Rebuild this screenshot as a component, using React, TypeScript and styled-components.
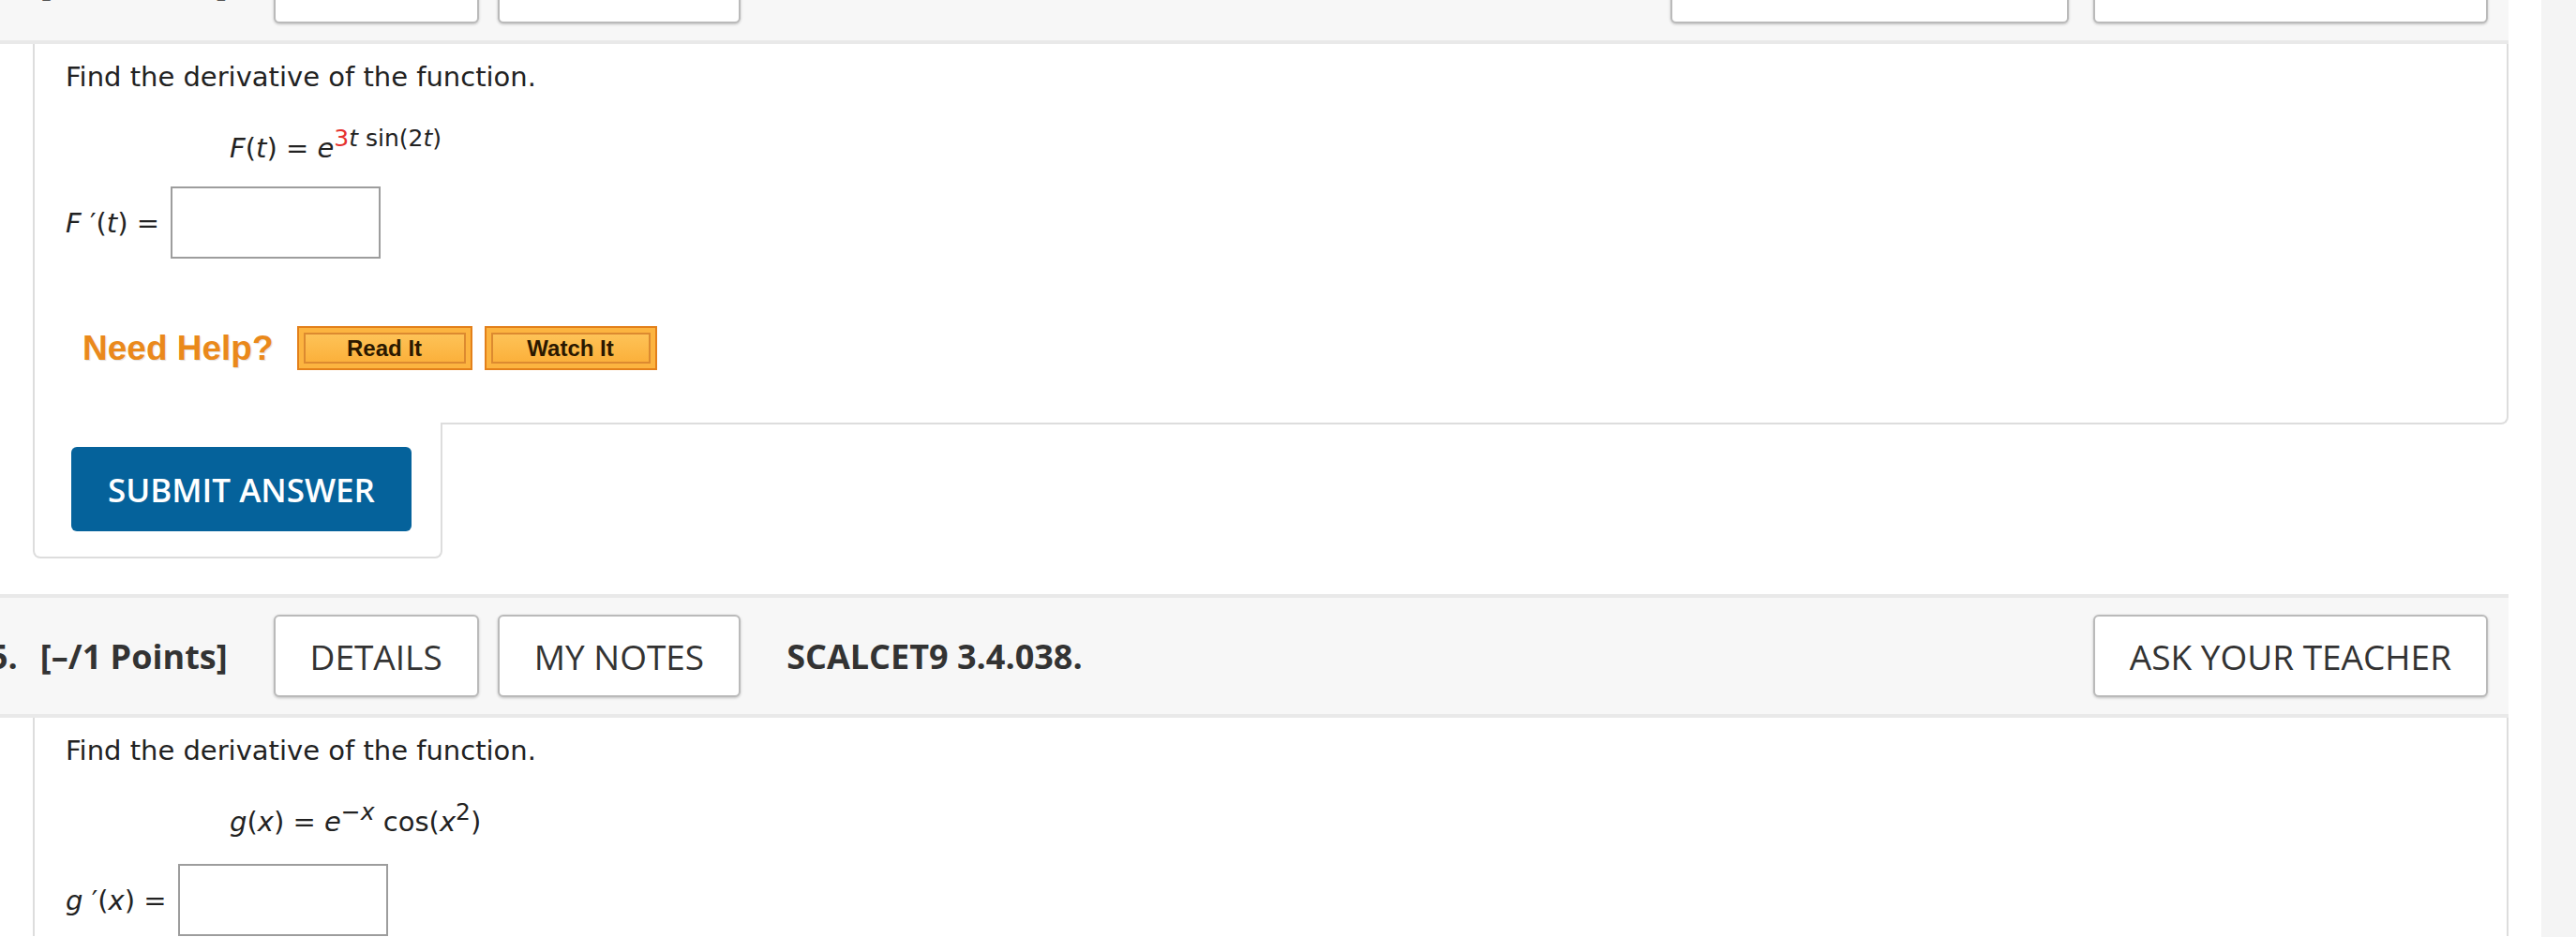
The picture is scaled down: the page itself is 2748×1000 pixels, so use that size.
import React from "react";
import styled, { createGlobalStyle, css } from "styled-components";

const GlobalStyle = createGlobalStyle`
  html, body {
    margin: 0;
    padding: 0;
    background: #fff;
  }
  body {
    font-family: "DejaVu Sans", Verdana, sans-serif;
    color: #222;
  }
`;

const Page = styled.div`
  display: grid;
  grid-template-columns: 2676px 35px 1fr;
  height: 1000px;
  overflow: hidden;
`;

const Main = styled.main`
  min-width: 0;
`;

const SideTrack = styled.div`
  grid-column: 3;
  background: #f4f4f4;
`;

/* ---------- question header ---------- */

const QHeader = styled.header<{ $offset: number }>`
  display: flex;
  align-items: center;
  height: 132px;
  box-sizing: border-box;
  margin-top: ${(p) => p.$offset}px;
  padding-right: 22px;
  background: #f7f7f7;
  border-top: 4px solid #e9e9e9;
  border-bottom: 4px solid #e9e9e9;
  font-family: "Open Sans", "DejaVu Sans", sans-serif;
  font-size: 36px;
  color: #333;
  white-space: nowrap;
`;

const QNumber = styled.span`
  font-weight: 700;
  margin-left: -12px;
  margin-right: 24px;
`;

const Points = styled.span`
  font-weight: 700;
  margin-right: 49px;
`;

const ButtonGroup = styled.div<{ $right?: boolean }>`
  display: flex;
  gap: ${(p) => (p.$right ? "26px" : "20px")};
  ${(p) =>
    p.$right
      ? css`
          margin-left: auto;
        `
      : css`
          margin-right: 49px;
        `}
`;

const HeadButton = styled.button`
  height: 88px;
  box-sizing: border-box;
  padding: 0 37px;
  background: #fff;
  border: 2px solid #bababa;
  border-radius: 6px;
  box-shadow: 0 1px 3px rgba(0, 0, 0, 0.22);
  font-family: inherit;
  font-size: 37px;
  color: #333;
  cursor: pointer;
`;

const Code = styled.span`
  font-weight: 700;
`;

/* ---------- question body ---------- */

const QBody = styled.div`
  margin-left: 35px;
`;

const Content = styled.div<{ $closed?: boolean }>`
  background: #fff;
  border-left: 2px solid #dddddd;
  border-right: 2px solid #dddddd;
  padding: 15px 0 0 33px;
  ${(p) =>
    p.$closed &&
    css`
      padding-bottom: 56px;
      border-bottom: 2px solid #dddddd;
      border-bottom-right-radius: 8px;
    `}
`;

const Prompt = styled.p`
  margin: 0;
  font-size: 29px;
  line-height: 40px;
`;

const Equation = styled.div`
  margin-top: 33px;
  padding-left: 175px;
  font-size: 29px;
  line-height: 40px;
  white-space: nowrap;
`;

const Var = styled.span`
  font-style: italic;
`;

const Sup = styled.span`
  font-size: 25px;
  line-height: 1;
  vertical-align: 12px;
`;

const Random = styled.span`
  color: #e5312f;
`;

const AnswerRow = styled.div<{ $gap: number }>`
  display: flex;
  align-items: center;
  gap: 12px;
  margin-top: ${(p) => p.$gap}px;
`;

const AnswerLabel = styled.span`
  font-size: 29px;
  white-space: nowrap;
`;

const AnswerBox = styled.input`
  width: 224px;
  height: 77px;
  box-sizing: border-box;
  border: 2px solid #9d9d9d;
  background: #fff;
  padding: 0 8px;
  font-size: 29px;
`;

const HelpRow = styled.div`
  display: flex;
  align-items: center;
  gap: 13px;
  height: 47px;
  margin-top: 72px;
`;

const NeedHelp = styled.span`
  margin-left: 18px;
  margin-right: 12px;
  font-family: "Liberation Sans", Arial, sans-serif;
  font-weight: 700;
  font-size: 37px;
  color: #ea891b;
  text-shadow: 1px 1px 1px rgba(0, 0, 0, 0.12);
`;

const HelpButton = styled.button<{ $width: number }>`
  width: ${(p) => p.$width}px;
  height: 47px;
  box-sizing: border-box;
  padding: 0;
  border: 2px solid #e3801a;
  background: linear-gradient(#fec75e, #fbac34);
  box-shadow: inset 0 0 0 5px #fcb440, inset 0 0 0 7px #dc8a30;
  font-family: "Liberation Sans", Arial, sans-serif;
  font-weight: 700;
  font-size: 24px;
  color: #2a1800;
  cursor: pointer;
`;

const SubmitTab = styled.div`
  width: 437px;
  box-sizing: border-box;
  margin-top: -2px;
  padding: 26px 31px 27px 39px;
  background: #fff;
  border: 2px solid #dddddd;
  border-top: none;
  border-radius: 0 0 8px 8px;
`;

const SubmitButton = styled.button`
  width: 363px;
  height: 90px;
  border: none;
  border-radius: 6px;
  background: #05629b;
  color: #fff;
  font-family: "Open Sans", sans-serif;
  font-weight: 600;
  font-size: 35px;
  cursor: pointer;
`;

interface HeaderProps {
  number: number;
  code: string;
  offset: number;
  practice?: boolean;
}

const QuestionHeader = ({ number, code, offset, practice }: HeaderProps) => (
  <QHeader $offset={offset}>
    <QNumber>{number}.</QNumber>
    <Points>[–/1 Points]</Points>
    <ButtonGroup>
      <HeadButton>DETAILS</HeadButton>
      <HeadButton>MY NOTES</HeadButton>
    </ButtonGroup>
    <Code>{code}</Code>
    <ButtonGroup $right>
      {practice && <HeadButton>PRACTICE ANOTHER</HeadButton>}
      <HeadButton>ASK YOUR TEACHER</HeadButton>
    </ButtonGroup>
  </QHeader>
);

const App = () => {
  return (
    <>
      <GlobalStyle />
      <Page>
        <Main>
          <QuestionHeader number={4} code="SCALCET9 3.4.037." offset={-85} practice />
          <QBody>
            <Content $closed>
              <Prompt>Find the derivative of the function.</Prompt>
              <Equation>
                <Var>F</Var>(<Var>t</Var>) = <Var>e</Var>
                <Sup>
                  <Random>3</Random>
                  <Var>t</Var> sin(2<Var>t</Var>)
                </Sup>
              </Equation>
              <AnswerRow $gap={21}>
                <AnswerLabel>
                  <Var>F</Var> ′(<Var>t</Var>) =
                </AnswerLabel>
                <AnswerBox type="text" />
              </AnswerRow>
              <HelpRow>
                <NeedHelp>Need Help?</NeedHelp>
                <HelpButton $width={187}>Read It</HelpButton>
                <HelpButton $width={184}>Watch It</HelpButton>
              </HelpRow>
            </Content>
            <SubmitTab>
              <SubmitButton>SUBMIT ANSWER</SubmitButton>
            </SubmitTab>
          </QBody>

          <QuestionHeader number={5} code="SCALCET9 3.4.038." offset={38} />
          <QBody>
            <Content>
              <Prompt>Find the derivative of the function.</Prompt>
              <Equation>
                <Var>g</Var>(<Var>x</Var>) = <Var>e</Var>
                <Sup>
                  −<Var>x</Var>
                </Sup>{" "}
                cos(<Var>x</Var>
                <Sup>2</Sup>)
              </Equation>
              <AnswerRow $gap={25}>
                <AnswerLabel>
                  <Var>g</Var> ′(<Var>x</Var>) =
                </AnswerLabel>
                <AnswerBox type="text" />
              </AnswerRow>
            </Content>
          </QBody>
        </Main>
        <SideTrack />
      </Page>
    </>
  );
};

export default App;
